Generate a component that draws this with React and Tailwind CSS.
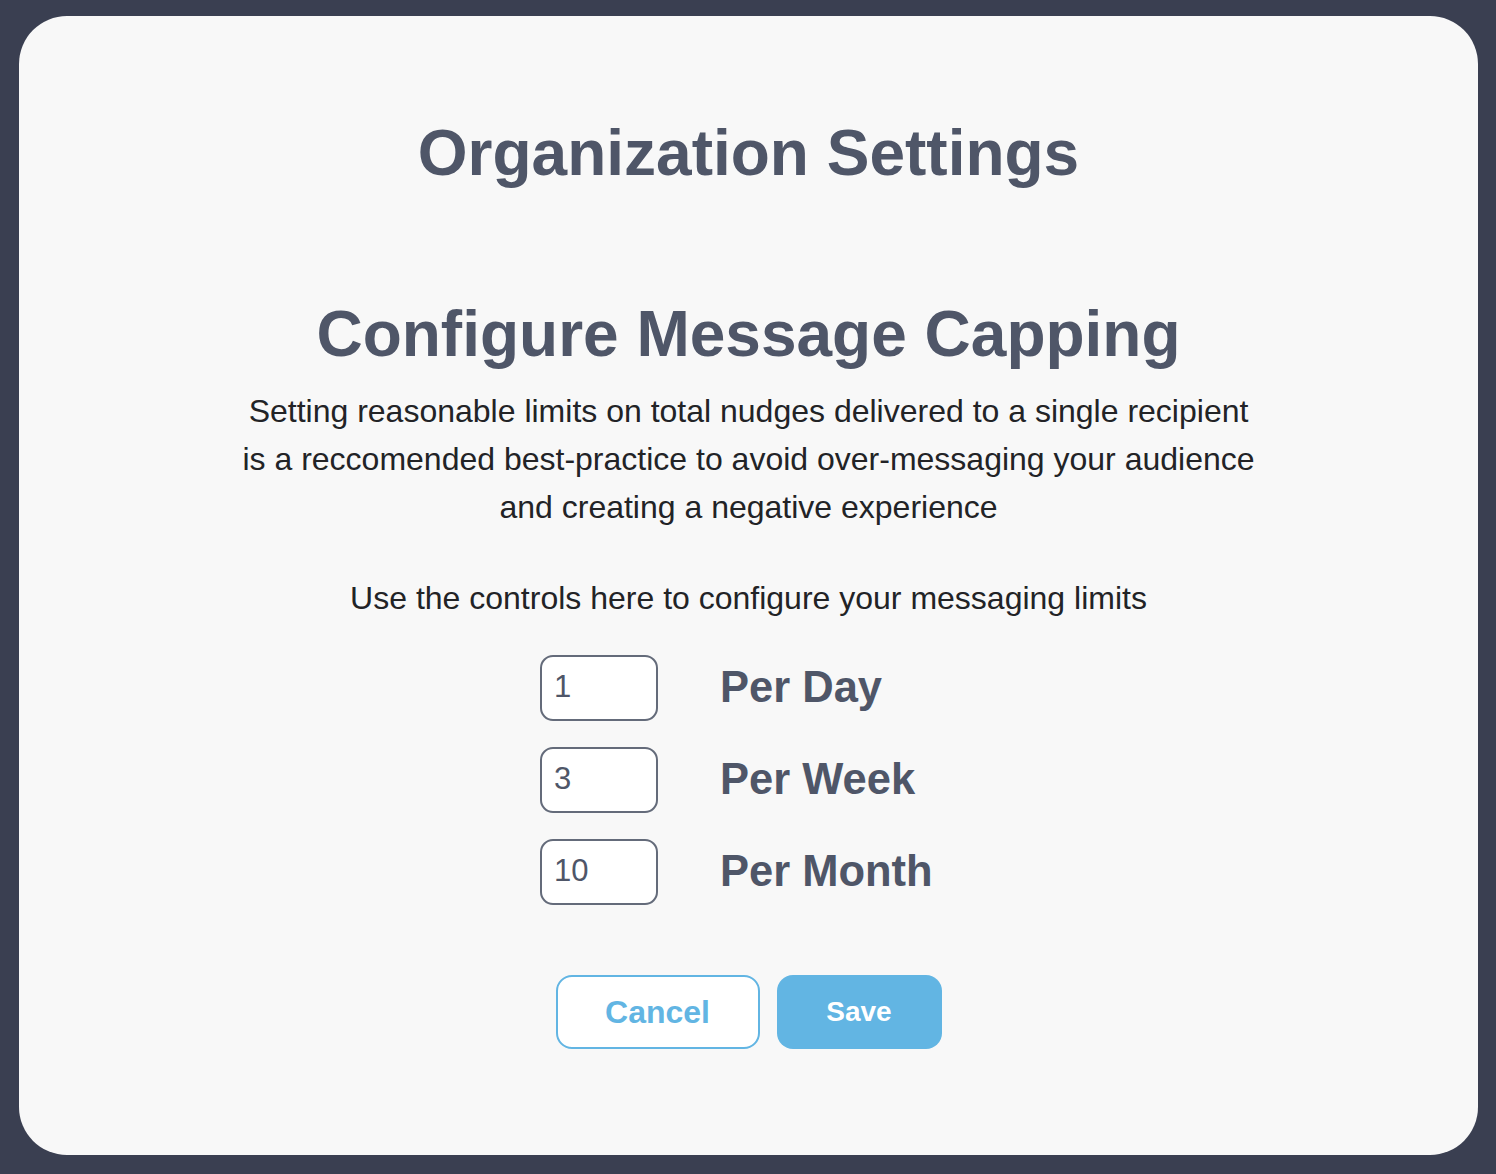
import React from "react";

const limits = [
  { value: "1", label: "Per Day" },
  { value: "3", label: "Per Week" },
  { value: "10", label: "Per Month" },
];

export default function App() {
  return (
    <div
      className="h-screen w-full bg-[#3a3f51] pt-[16px] pl-[19px] pr-[18px] pb-[19px]"
      style={{ fontFamily: '"Liberation Sans", Arial, sans-serif' }}
    >
      <div className="flex h-full w-full flex-col items-center rounded-[48px] bg-[#f8f8f8] pt-[105px]">
        <h1 className="text-[64px] font-bold leading-none text-[#4f5668]">
          Organization Settings
        </h1>

        <h2 className="mt-[117px] text-[64px] font-bold leading-none text-[#4f5668]">
          Configure Message Capping
        </h2>

        <p className="mt-[21px] text-center text-[32px] leading-[48px] text-[#222326]">
          Setting reasonable limits on total nudges delivered to a single recipient
          <br />
          is a reccomended best-practice to avoid over-messaging your audience
          <br />
          and creating a negative experience
        </p>

        <p className="mt-[43px] text-center text-[32px] leading-[48px] text-[#222326]">
          Use the controls here to configure your messaging limits
        </p>

        <div className="mt-[33px] flex w-[417px] flex-col gap-[26px]">
          {limits.map((l) => (
            <div key={l.label} className="flex items-center gap-[62px]">
              <input
                type="text"
                defaultValue={l.value}
                className="h-[66px] w-[118px] rounded-[13px] border-2 border-[#646b7a] bg-white pl-[12px] pb-[2px] text-[31px] text-[#4f5668] outline-none"
              />
              <span className="text-[43.5px] font-bold leading-none text-[#4f5668]">
                {l.label}
              </span>
            </div>
          ))}
        </div>

        <div className="mt-[70px] flex gap-[17px]">
          <button className="h-[74px] w-[204px] rounded-[16px] border-2 border-[#62b5e3] bg-white text-[32px] font-bold text-[#62b5e3]">
            Cancel
          </button>
          <button className="h-[74px] w-[165px] rounded-[16px] bg-[#62b5e3] text-[28px] font-bold text-white">
            Save
          </button>
        </div>
      </div>
    </div>
  );
}
